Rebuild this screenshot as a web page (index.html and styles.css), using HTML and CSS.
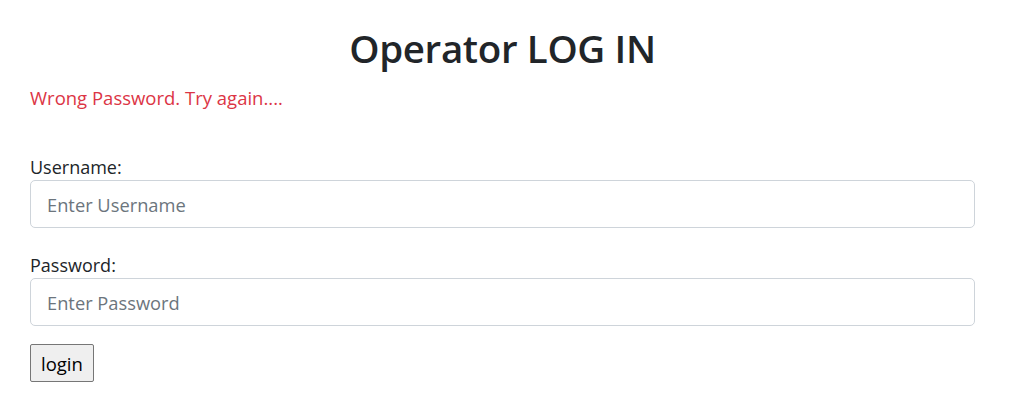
FILE: index.html
```html
<!DOCTYPE html>
<html lang="en">
<head>
<meta charset="utf-8">
<title>Operator LOG IN</title>
<link rel="stylesheet" href="styles.css">
</head>
<body>
<main class="page">
  <h1 class="title">Operator LOG IN</h1>
  <p class="error">Wrong Password. Try again....</p>
  <form class="login-form">
    <div class="field">
      <label class="label" for="username">Username:</label>
      <input class="input" id="username" type="text" placeholder="Enter Username">
    </div>
    <div class="field">
      <label class="label" for="password">Password:</label>
      <input class="input" id="password" type="password" placeholder="Enter Password">
    </div>
    <button class="btn" type="submit">login</button>
  </form>
</main>
</body>
</html>
```
FILE: styles.css
```css
* { box-sizing: border-box; }
html, body { margin: 0; padding: 0; background: #fff; }
body {
  font-family: "Open Sans", "Noto Sans", "Liberation Sans", sans-serif;
  color: #212529;
  font-size: 18px;
  line-height: 1.5;
}
.page {
  width: 945px;
  margin-left: 30px;
  padding-top: 20px;
}
.title {
  margin: 0;
  text-align: center;
  font-size: 38.5px;
  font-weight: 600;
  letter-spacing: -0.35px;
  line-height: 56px;
}
.error {
  margin: 8px 0 0;
  color: #dc3545;
  font-size: 18.5px;
  line-height: 28px;
}
.login-form {
  display: flex;
  flex-direction: column;
  align-items: flex-start;
  margin-top: 42px;
}
.field {
  display: flex;
  flex-direction: column;
  width: 100%;
  margin-bottom: 24px;
}
.field:last-of-type { margin-bottom: 18px; }
.label {
  font-size: 18px;
  line-height: 26px;
  margin-bottom: 0;
}
.input {
  width: 100%;
  height: 48px;
  padding: 0 16px;
  border: 1px solid #ced4da;
  border-radius: 5px;
  font-family: inherit;
  font-size: 18.3px;
  color: #212529;
  background: #fff;
}
.input::placeholder { color: #6c757d; opacity: 1; }
.btn {
  height: 38px;
  padding: 0 10px;
  border: 1px solid #767676;
  border-radius: 2px;
  background: #efefef;
  font-family: inherit;
  font-size: 18.5px;
  color: #000;
}
```
